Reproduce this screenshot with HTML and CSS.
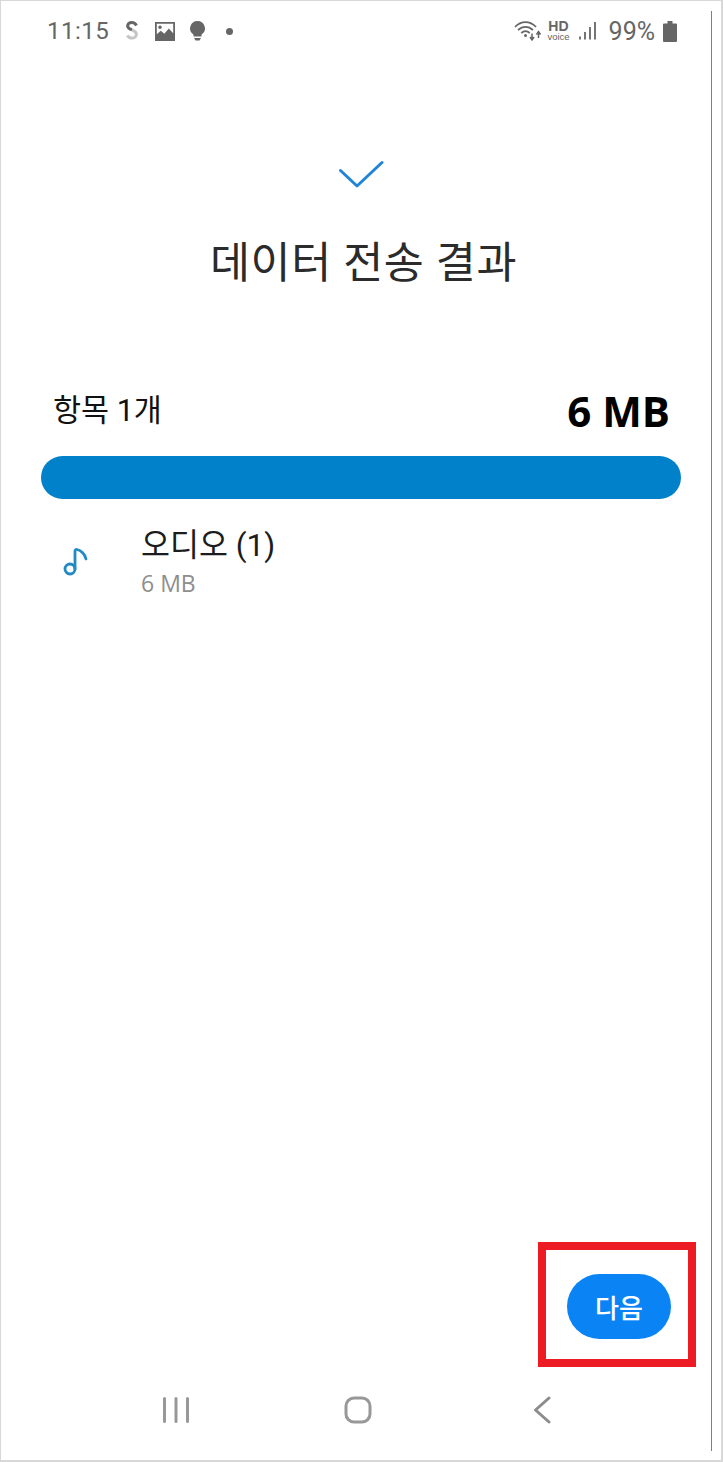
FILE: index.html
```html
<!DOCTYPE html>
<html lang="ko">
<head>
  <meta charset="UTF-8">
  <meta name="viewport" content="width=device-width, initial-scale=1.0">
  <title>데이터 전송 결과</title>
  <link rel="stylesheet" href="styles.css">
</head>
<body>
  <div class="phone">
    <div class="status">
      <div class="status-left">
        <span class="clock">11:15</span>
        <svg class="ic-s" width="14" height="20" viewBox="0 0 14 20">
          <path d="M11.500 4.500C10.500 2.500 8.800 1.500 6.800 1.500 4.300 1.500 2.600 3 2.600 5c0 2.200 2.200 3 4.400 3.800" fill="none" stroke="#666" stroke-width="3"/>
          <path d="M7 8.800c2.400 1 4.400 2 4.400 4.400 0 2-1.900 3.900-4.400 3.900-2.100 0-3.800-1-4.600-2.800" fill="none" stroke="#c6c6c6" stroke-width="3"/>
        </svg>
        <svg class="ic-pic" width="20" height="19" viewBox="0 0 20 19">
          <path fill="#666" fill-rule="evenodd" d="M0 0h20v19H0zM1.800 1.800v10.500l4-3.600 3.500 3 4.500-5.200 4.400 4.800V1.800zM5 3.500a1.800 1.800 0 1 1 0 3.600 1.800 1.800 0 0 1 0-3.600z"/>
        </svg>
        <svg class="ic-bulb" width="15" height="20" viewBox="0 0 15 20">
          <path fill="#666" d="M7.500 0a7.500 7.500 0 0 1 4 13.800V15.500h-8v-1.700A7.500 7.500 0 0 1 7.500 0zM4 17h7l-1.500 2.500h-4z"/>
        </svg>
        <span class="dot"></span>
      </div>
      <div class="status-right">
        <svg class="ic-wifi" width="28" height="22" viewBox="0 0 28 22">
          <g fill="none" stroke="#666" stroke-width="1.800">
            <path d="M1 7C7 .5 16 .5 22 7"/>
            <path d="M4 10c4.500-4.200 10.500-4.200 15 0"/>
            <path d="M7.300 13c2.700-2.400 5.700-2.400 8.400 0"/>
          </g>
          <circle cx="11.500" cy="15.500" r="1.500" fill="#666"/>
          <path d="M18 13.500v6M16 17l2 3 2-3M24.500 18v-6M22.500 14.500l2-3 2 3" fill="none" stroke="#666" stroke-width="1.500"/>
        </svg>
        <span class="hd"><b>HD</b><i>voice</i></span>
        <svg class="ic-signal" width="20" height="20" viewBox="0 0 20 20">
          <path d="M2 15.500v3M7 11v7.500M12 6v12.500M17 1v17.500" stroke="#666" stroke-width="1.800" fill="none"/>
        </svg>
        <span class="batt-text">99%</span>
        <svg class="ic-batt" width="14" height="21" viewBox="0 0 14 21">
          <path fill="#666" d="M4.500 0h5v2.500H13a1 1 0 0 1 1 1V20a1 1 0 0 1-1 1H1a1 1 0 0 1-1-1V3.500a1 1 0 0 1 1-1h3.500z"/>
        </svg>
      </div>
    </div>

    <main class="content">
      <svg class="check" width="46" height="30" viewBox="0 0 46 30">
        <path d="M2.500 10.500L19 26 44 2.500" fill="none" stroke="#2085d8" stroke-width="3" stroke-linecap="round" stroke-linejoin="round"/>
      </svg>
      <h1 class="title">데이터 전송 결과</h1>

      <div class="summary">
        <span class="summary-label">항목 1개</span>
        <span class="summary-size">6 MB</span>
      </div>
      <div class="bar"></div>

      <div class="item">
        <svg class="note" width="26" height="30" viewBox="0 0 26 30">
          <circle cx="7" cy="23" r="5" fill="none" stroke="#2189c4" stroke-width="2.800"/>
          <path d="M12 23V5c0-1 1-1.800 2-1.500 4 .8 8 4.500 9 9.500" fill="none" stroke="#2189c4" stroke-width="2.800" stroke-linecap="round"/>
        </svg>
        <div class="item-text">
          <div class="item-name">오디오 (1)</div>
          <div class="item-size">6 MB</div>
        </div>
      </div>
    </main>

    <div class="actions">
      <div class="highlight">
        <button class="next">다음</button>
      </div>
    </div>

    <nav class="navbar">
      <svg class="nav-recent" width="26" height="26" viewBox="0 0 26 26">
        <path d="M1.500 1.500v23M13 1.500v23M24.500 1.500v23" stroke="#989898" stroke-width="3" stroke-linecap="round"/>
      </svg>
      <svg class="nav-home" width="28" height="28" viewBox="0 0 28 28">
        <rect x="2" y="2" width="24" height="24" rx="8" fill="none" stroke="#989898" stroke-width="3"/>
      </svg>
      <svg class="nav-back" width="18" height="28" viewBox="0 0 18 28">
        <path d="M16 2L2.500 14 16 26" fill="none" stroke="#8c8c8c" stroke-width="3" stroke-linecap="round" stroke-linejoin="round"/>
      </svg>
    </nav>
  </div>
</body>
</html>
```

FILE: styles.css
```css
html, body {
  margin: 0;
  padding: 0;
  background: #fff;
}

.phone {
  box-sizing: border-box;
  position: relative;
  width: 723px;
  height: 1462px;
  border: 1px solid #d8d8d8;
  border-right-width: 2px;
  border-bottom-width: 2px;
  display: flex;
  flex-direction: column;
  font-family: Roboto, "Noto Sans CJK KR", sans-serif;
  color: #252525;
  background: #fff;
}

/* thin dark line down the right side */
.phone::after {
  content: "";
  position: absolute;
  top: 10px;
  bottom: 9px;
  left: 710px;
  width: 1px;
  background: #808080;
}

/* status bar */
.status {
  height: 60px;
  padding: 0 44px 0 46px;
  display: flex;
  justify-content: space-between;
  align-items: center;
  color: #666;
}

.status-left, .status-right {
  display: flex;
  align-items: center;
}

.clock {
  font-size: 24px;
  letter-spacing: 0.5px;
  margin-right: 16px;
}

.ic-pic { margin-left: 16px; }
.ic-bulb { margin-left: 15px; }

.dot {
  width: 7px;
  height: 7px;
  border-radius: 50%;
  background: #666;
  margin-left: 21px;
}

.hd {
  display: flex;
  flex-direction: column;
  align-items: center;
  margin-left: 5px;
  font-family: "Liberation Sans", sans-serif;
}

.hd b { font-size: 14px; line-height: 11px; }
.hd i { font-size: 9.5px; line-height: 9px; font-style: normal; }

.ic-signal { margin-left: 8px; }

.batt-text {
  font-size: 25px;
  margin-left: 11px;
}

.ic-batt { margin-left: 8px; }

/* main */
.content {
  flex: 1;
  display: flex;
  flex-direction: column;
}

.check {
  align-self: center;
  margin: 99px 0 0;
}

.title {
  margin: 42px 0 0;
  padding-left: 5px;
  text-align: center;
  font-size: 43.5px;
  font-weight: 400;
  line-height: 64px;
  letter-spacing: 0.6px;
  color: #2b2b2b;
}

.summary {
  margin: 86px 51px 0 52px;
  display: flex;
  justify-content: space-between;
  align-items: center;
  height: 60px;
}

.summary-label {
  font-size: 30.5px;
  color: #111;
  margin-bottom: 8px;
}

.summary-size {
  font-family: "Open Sans", sans-serif;
  font-size: 42px;
  font-weight: 700;
  color: #000;
  margin-bottom: 4px;
}

.bar {
  margin: 14px 40px 0;
  height: 43px;
  border-radius: 22px;
  background: #0081ca;
}

.item {
  display: flex;
  align-items: flex-start;
  margin: 23px 0 0 62px;
}

.note {
  margin-top: 24px;
}

.item-text {
  margin-left: 52px;
}

.item-name {
  font-size: 31.5px;
  line-height: 48px;
  color: #1c1c1c;
}

.item-size {
  font-family: "Open Sans", sans-serif;
  font-size: 23px;
  line-height: 26px;
  color: #8e8e8e;
}

/* next button */
.actions {
  display: flex;
  justify-content: flex-end;
  padding-right: 25px;
}

.highlight {
  box-sizing: border-box;
  width: 158px;
  height: 125px;
  border: 8px solid #ed1c24;
  padding: 24px 16px 0 21px;
}

.next {
  display: block;
  width: 104px;
  height: 65px;
  border: 0;
  border-radius: 33px;
  background: #0a84f5;
  color: #fff;
  font-family: inherit;
  font-size: 26px;
  font-weight: 500;
}

/* nav bar */
.navbar {
  height: 93px;
  box-sizing: border-box;
  padding: 30px 0 0 162px;
  display: flex;
  align-items: flex-start;
}

.nav-home { margin-left: 155px; margin-top: -1px; }
.nav-back { margin-left: 161px; margin-top: -1px; }
```
